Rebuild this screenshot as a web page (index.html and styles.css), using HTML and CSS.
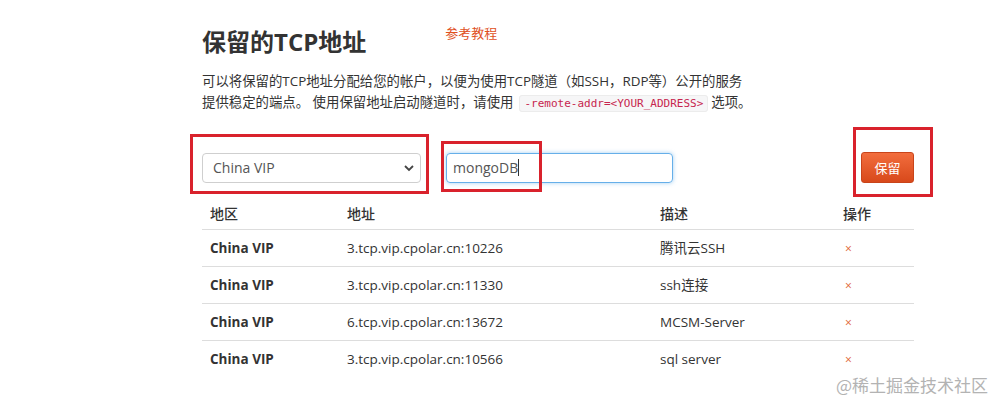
FILE: index.html
```html
<!DOCTYPE html>
<html lang="zh-CN">
<head>
  <meta charset="UTF-8">
  <meta name="viewport" content="width=device-width, initial-scale=1.0">
  <title>保留的TCP地址</title>
  <link rel="stylesheet" href="styles.css">
</head>
<body>
  <div class="page">
    <div class="title-row">
      <h1>保留的TCP地址</h1>
      <a class="guide" href="#">参考教程</a>
    </div>
    <p class="desc">可以将保留的TCP地址分配给您的帐户，以便为使用TCP隧道（如SSH，RDP等）公开的服务<br>提供稳定的端点。 使用保留地址启动隧道时，请使用<code>-remote-addr=&lt;YOUR_ADDRESS&gt;</code>选项。</p>

    <div class="form-row">
      <div class="select-wrap">
        <select class="region">
          <option>China VIP</option>
        </select>
        <svg class="chevron" width="12" height="8" viewBox="0 0 12 8"><path d="M2 2 L6 6 L10 2" fill="none" stroke="#444" stroke-width="1.8"/></svg>
      </div>
      <div class="name-input"><span>mongoDB</span><i class="caret"></i></div>
      <button class="save">保留</button>

      <!-- annotation boxes drawn over the screenshot -->
      <div class="mark mark-select"></div>
      <div class="mark mark-input"></div>
      <div class="mark mark-button"></div>
    </div>

    <table class="addr-table">
      <thead>
        <tr><th class="c-region">地区</th><th class="c-addr">地址</th><th class="c-desc">描述</th><th class="c-op">操作</th></tr>
      </thead>
      <tbody>
        <tr><td class="region-name">China VIP</td><td>3.tcp.vip.cpolar.cn:10226</td><td>腾讯云SSH</td><td><span class="del">×</span></td></tr>
        <tr><td class="region-name">China VIP</td><td>3.tcp.vip.cpolar.cn:11330</td><td>ssh连接</td><td><span class="del">×</span></td></tr>
        <tr><td class="region-name">China VIP</td><td>6.tcp.vip.cpolar.cn:13672</td><td>MCSM-Server</td><td><span class="del">×</span></td></tr>
        <tr><td class="region-name">China VIP</td><td>3.tcp.vip.cpolar.cn:10566</td><td>sql server</td><td><span class="del">×</span></td></tr>
      </tbody>
    </table>
  </div>
  <div class="watermark">@稀土掘金技术社区</div>
</body>
</html>
```

FILE: styles.css
```css
body {
  margin: 0;
  background: #fff;
  color: #333;
  font-family: "Open Sans", "Noto Sans CJK SC", sans-serif;
  overflow: hidden;
}

.page {
  width: 712px;
  padding: 27px 0 0 202px;
}

.title-row {
  display: flex;
  align-items: flex-start;
}

h1 {
  margin: 0;
  font-size: 24px;
  line-height: 30px;
  font-weight: 700;
  color: #333;
}

.guide {
  margin: -3px 0 0 79px;
  font-size: 13px;
  line-height: 18px;
  color: #e0501d;
  text-decoration: none;
}

.desc {
  margin: 14px 0 0;
  font-size: 13.4px;
  line-height: 21px;
  color: #333;
}

code {
  font-family: "DejaVu Sans Mono", monospace;
  font-size: 11px;
  color: #c7254e;
  background: #f6f6f7;
  border: 1px solid #ececec;
  border-radius: 3px;
  padding: 1px 4px;
  margin: 0 3px 0 6px;
}

.form-row {
  position: relative;
  display: flex;
  align-items: center;
  margin-top: 38px;
  height: 31px;
}

.select-wrap {
  position: relative;
  width: 219px;
}

.region {
  width: 100%;
  height: 30px;
  appearance: none;
  -webkit-appearance: none;
  border: 1px solid #cfcfcf;
  border-radius: 4px;
  background: #fff;
  padding: 0 10px;
  font-family: inherit;
  font-size: 14px;
  color: #555;
}

.chevron {
  position: absolute;
  right: 6px;
  top: 11px;
}

.name-input {
  box-sizing: border-box;
  display: flex;
  align-items: center;
  width: 227px;
  height: 30px;
  margin-left: 25px;
  padding: 0 6px;
  border: 1px solid #66afe9;
  border-radius: 4px;
  box-shadow: 0 0 4px rgba(102, 175, 233, 0.6);
  font-size: 14px;
  color: #555;
}

.caret {
  width: 1px;
  height: 17px;
  background: #333;
}

.save {
  margin-left: auto;
  height: 31px;
  width: 53px;
  border: 1px solid #c9441a;
  border-radius: 3px;
  background: linear-gradient(#f26d3d, #d8491b);
  color: #fff;
  font-family: inherit;
  font-size: 13px;
  padding: 0;
}

.mark {
  position: absolute;
  border: 3px solid #d9222c;
}

.mark-select {
  left: -12px;
  top: -18px;
  width: 233px;
  height: 54px;
}

.mark-input {
  left: 239px;
  top: -11px;
  width: 95px;
  height: 45px;
}

.mark-button {
  left: 651px;
  top: -25px;
  width: 74px;
  height: 64px;
}

.addr-table {
  width: 712px;
  margin-top: 15px;
  border-collapse: collapse;
  font-size: 13.5px;
  line-height: 18px;
  color: #333;
}

.addr-table th {
  text-align: left;
  font-weight: 500;
  font-size: 14px;
  height: 31px;
  padding: 0 8px;
  vertical-align: middle;
  border-bottom: 1px solid #ddd;
}

.addr-table td {
  height: 36px;
  padding: 0 8px;
  border-bottom: 1px solid #ddd;
}

.addr-table tbody tr:last-child td {
  border-bottom: none;
}

.c-region { width: 121px; }
.c-addr { width: 297px; }
.c-desc { width: 167px; }

.region-name {
  font-weight: 700;
}

.del {
  margin-left: 2px;
  color: #e0622f;
  font-size: 12px;
}

.watermark {
  position: absolute;
  right: 5px;
  bottom: 7px;
  font-size: 17px;
  color: #b3b3b3;
  font-family: "Noto Sans CJK SC", sans-serif;
}
```
